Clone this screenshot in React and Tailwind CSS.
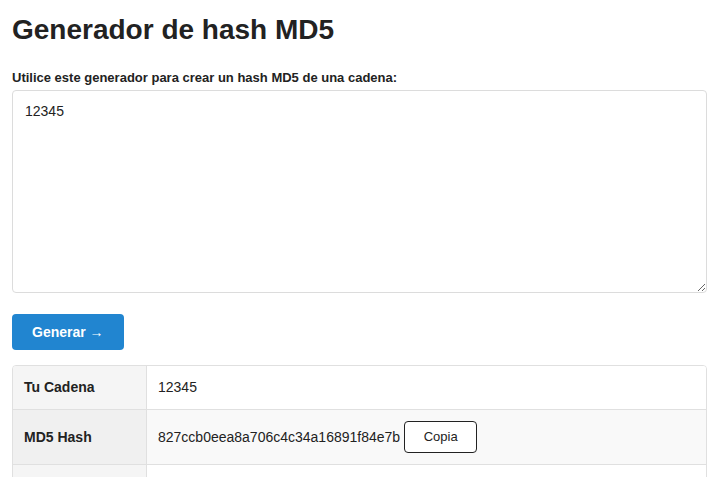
import React from 'react'

export default function App() {
  return (
    <div className="min-h-screen bg-white px-[12px] pt-[14px] text-[#222] font-['Liberation_Sans',Arial,sans-serif]">
      <h1 className="text-[28px] font-bold leading-[32px]">Generador de hash MD5</h1>

      <label className="mt-[24px] block text-[13px] font-bold leading-[16px]">
        Utilice este generador para crear un hash MD5 de una cadena:
      </label>
      <textarea
        defaultValue="12345"
        className="mt-[4px] block h-[203px] w-full resize-y rounded-[4px] border border-[#dcdcdc] px-[12px] py-[10px] text-[14px] leading-[20px] text-[#222] outline-none"
      />

      <button className="mt-[21px] block h-[36px] rounded-[4px] bg-[#2185d0] px-[20px] text-[14px] font-bold text-white">
        Generar →
      </button>

      {/* resultados */}
      <table className="mt-[15px] w-full border-separate border-spacing-0 overflow-hidden rounded-[4px] border border-[#e0e0e0] text-[14px]">
        <tbody>
          <tr>
            <th className="w-[134px] border-r border-[#e0e0e0] bg-[#f5f5f5] px-[11px] py-[12px] text-left font-bold leading-[19px]">
              Tu Cadena
            </th>
            <td className="bg-white px-[11px] py-[12px] leading-[19px]">12345</td>
          </tr>
          <tr>
            <th className="border-r border-t border-[#e0e0e0] bg-[#f0f0f0] px-[11px] py-[11px] text-left font-bold">
              MD5 Hash
            </th>
            <td className="border-t border-[#e0e0e0] bg-[#f9f9f9] px-[11px] py-[11px]">
              <div className="flex items-center gap-[4px]">
                <span>827ccb0eea8a706c4c34a16891f84e7b</span>
                <button className="h-[32px] w-[73px] rounded-[4px] border border-[#222] bg-white text-[13px]">
                  Copia
                </button>
              </div>
            </td>
          </tr>
          <tr>
            <th className="h-[44px] border-r border-t border-[#e0e0e0] bg-[#f5f5f5]"></th>
            <td className="h-[44px] border-t border-[#e0e0e0] bg-white"></td>
          </tr>
        </tbody>
      </table>
    </div>
  )
}
